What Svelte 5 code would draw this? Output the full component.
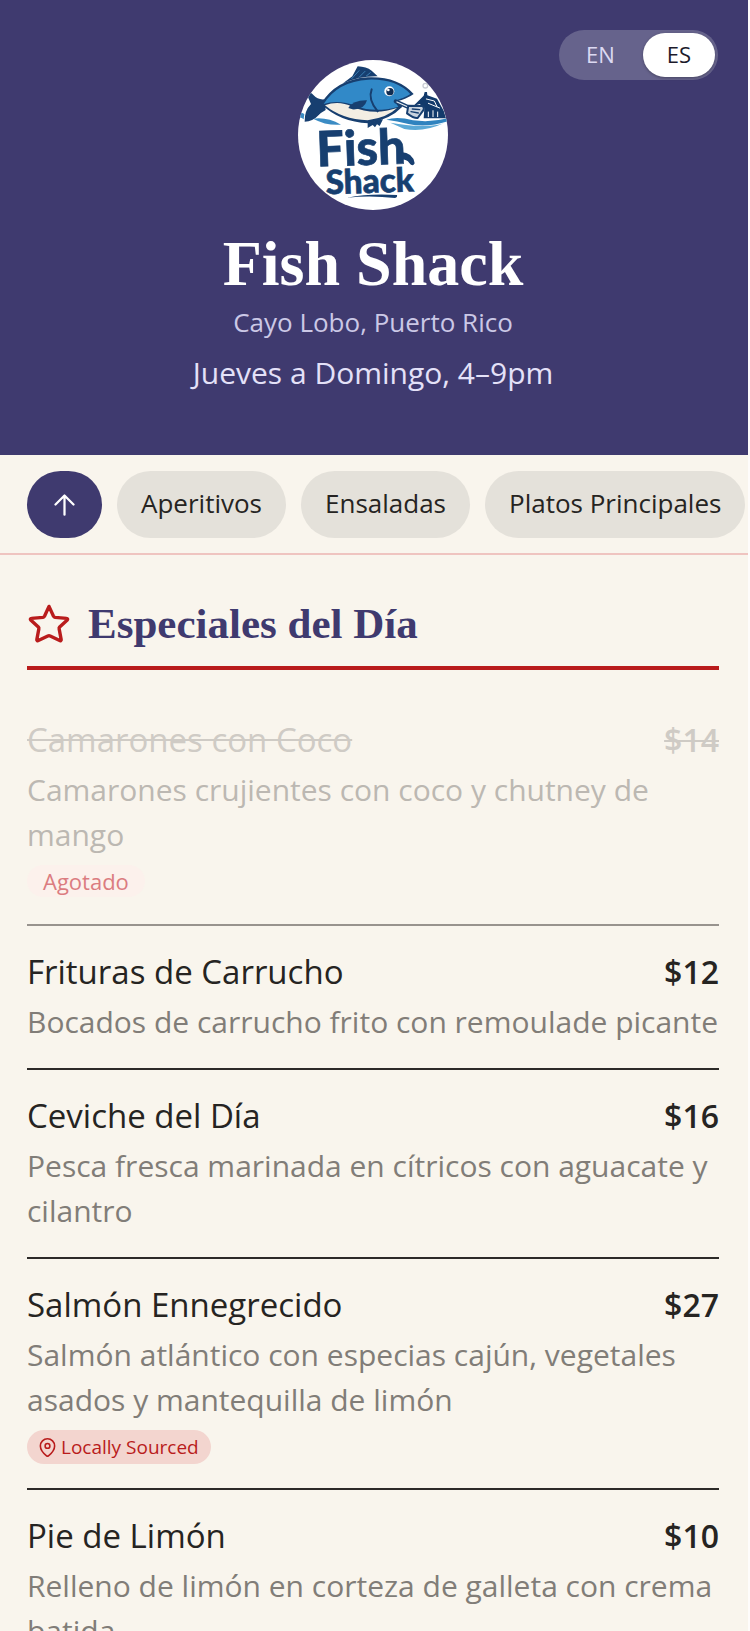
<script>
  let lang = 'es';

  const languages = [
    { id: 'en', label: 'EN' },
    { id: 'es', label: 'ES' }
  ];

  const categories = [
    { id: 'aperitivos', name: 'Aperitivos' },
    { id: 'ensaladas', name: 'Ensaladas' },
    { id: 'platos', name: 'Platos Principales' }
  ];

  const specials = [
    {
      id: 1,
      name: 'Camarones con Coco',
      price: 14,
      description: 'Camarones crujientes con coco y chutney de mango',
      soldOut: true
    },
    { id: 2, name: 'Frituras de Carrucho', price: 12, description: 'Bocados de carrucho frito con remoulade picante' },
    { id: 3, name: 'Ceviche del Día', price: 16, description: 'Pesca fresca marinada en cítricos con aguacate y cilantro' },
    {
      id: 4,
      name: 'Salmón Ennegrecido',
      price: 27,
      description: 'Salmón atlántico con especias cajún, vegetales asados y mantequilla de limón',
      local: true
    },
    { id: 5, name: 'Pie de Limón', price: 10, description: 'Relleno de limón en corteza de galleta con crema batida' }
  ];
</script>

<svelte:head>
  <title>Fish Shack</title>
</svelte:head>

<div class="app" id="top">
  <header>
    <div class="lang-toggle">
      {#each languages as l}
        <button type="button" class:active={lang === l.id} aria-pressed={lang === l.id} on:click={() => (lang = l.id)}>
          {l.label}
        </button>
      {/each}
    </div>

    <svg class="logo" viewBox="53 28 450 450" role="img" aria-label="Fish Shack logo">
      <defs>
        <clipPath id="badge"><circle cx="278" cy="253" r="225" /></clipPath>
      </defs>
      <g clip-path="url(#badge)">
        <rect x="53" y="28" width="450" height="450" fill="#fff" />
        <!-- waves -->
        <path d="M53 188 Q62 184 72 190 L70 206 Q62 198 53 202Z" fill="#3b8cc4" />
        <path d="M98 204 Q140 198 182 222 Q140 226 98 204Z" fill="#3b8cc4" />
        <path d="M318 207 Q350 196 398 209 Q450 216 503 203 L503 212 Q440 232 384 220 Q350 211 318 207Z" fill="#2f83bf" />
        <path d="M330 216 Q380 224 420 226 Q460 228 490 218 Q430 246 372 235Z" fill="#5ba9d6" />
        <!-- shack -->
        <path d="M399 166 L430 135 L433 124 L440 124 L441 134 L470 144 L490 180 L497 203 L430 203 L432 172 L418 160Z" fill="#123a6b" />
        <path d="M438 145 L462 151 L470 168 M444 158 L478 172" fill="none" stroke="#fff" stroke-width="3" />
        <path d="M444 184 V198 M458 180 V198 M472 184 V198" stroke="#fff" stroke-width="3" />
        <circle cx="435" cy="105" r="7" fill="none" stroke="#c9ccd4" stroke-width="4" />
        <!-- fish -->
        <path d="M188 98 Q204 86 216 77 Q226 58 232 47 Q258 48 274 60 L292 77 Q238 76 188 98Z" fill="#173f70" />
        <path d="M214 84 L236 60 M236 80 L254 62 M258 76 L270 66" stroke="#3b7fb5" stroke-width="3" />
        <path d="M132 146 Q112 148 100 134 Q88 120 78 124 Q84 144 92 160 Q72 180 73 213 Q98 212 112 196 Q124 184 136 178Z" fill="#173f70" />
        <path d="M262 216 L308 206 L298 226 L290 221 L284 230 L277 223 L262 232Z" fill="#173f70" />
        <path d="M122 160 Q166 86 262 80 Q352 76 400 130 Q390 138 374 144 Q366 148 350 152 L366 168 Q330 206 264 218 Q178 214 122 160Z" fill="#173f70" />
        <path d="M130 160 Q172 92 264 87 Q346 84 390 130 Q372 142 342 150 L354 168 Q280 188 228 166 Q174 146 130 160Z" fill="#3189c8" />
        <path d="M134 164 Q174 148 216 168 Q280 196 350 172 Q322 200 262 209 Q184 206 134 164Z" fill="#f3eee3" />
        <path d="M204 172 Q218 148 260 149 Q252 178 216 176Z" fill="#173f70" />
        <path d="M274 116 Q262 146 292 182" fill="none" stroke="#173f70" stroke-width="6" />
        <circle cx="327" cy="122" r="15" fill="#fff" />
        <circle cx="329" cy="123" r="11" fill="#102c52" />
        <circle cx="324" cy="118" r="4" fill="#fff" />
        <!-- spatula -->
        <path d="M346 152 L390 172" stroke="#173f70" stroke-width="12" />
        <path d="M350 154 L390 172" stroke="#e8edf2" stroke-width="4" />
        <path d="M384 165 L426 166 Q434 170 428 180 L412 202 Q402 204 380 188Z" fill="#c9d3de" stroke="#173f70" stroke-width="6" />
        <path d="M396 175 L418 177 M392 183 L414 187" stroke="#173f70" stroke-width="4" />
        <!-- lettering -->
        <g class="lettering" transform="rotate(-2 278 350)">
          <text x="110" y="342" font-size="146">Fish</text>
          <text x="134" y="426" font-size="100">Shack</text>
        </g>
        <path d="M362 304 Q398 306 403 338 Q397 350 387 337 Q380 326 362 326Z" fill="#173f70" />
        <path d="M200 441 Q270 427 350 433 Q352 440 344 442 Q270 433 200 441Z" fill="#173f70" />
      </g>
    </svg>

    <h1>Fish Shack</h1>
    <p class="location">Cayo Lobo, Puerto Rico</p>
    <p class="hours">Jueves a Domingo, 4–9pm</p>
  </header>

  <nav>
    <a class="pill pill-top" href="#top" aria-label="Volver arriba">
      <svg viewBox="0 0 24 24" width="27" height="27">
        <path d="M12 21V4M4 12l8-8 8 8" />
      </svg>
    </a>
    {#each categories as category}
      <a class="pill" href="#{category.id}">{category.name}</a>
    {/each}
  </nav>

  <main>
    <h2>
      <svg viewBox="-1 -1 26 26" width="44" height="44" aria-hidden="true">
        <path d="M12 1.600l2.600 5.700c.2.400.5.700 1 .8l6.800.6c.6 0 .8.500.4.900l-4.500 4.200c-.3.300-.4.700-.3 1.100l1.200 6.300c.1.500-.4.900-.9.600l-5.600-2.700a1.600 1.600 0 0 0-1.400 0l-5.600 2.700c-.5.300-1-.1-.9-.6L6 14.900c.1-.4 0-.8-.3-1.100L1.200 9.600c-.4-.4-.2-.9.400-.9l6.800-.6c.5-.1.800-.4 1-.8z" />
      </svg>
      Especiales del Día
    </h2>

    <ul>
      {#each specials as item (item.id)}
        <li class:sold-out={item.soldOut}>
          <div class="item-header">
            <h3>{item.name}</h3>
            <span class="price">${item.price}</span>
          </div>
          <p>{item.description}</p>
          {#if item.soldOut}
            <span class="tag-sold-out">Agotado</span>
          {/if}
          {#if item.local}
            <span class="tag-local">
              <svg viewBox="0 0 24 24" width="19" height="19" aria-hidden="true">
                <path d="M21 10c0 5-5 10.200-7.800 12.500a2 2 0 0 1-2.400 0C8 20.200 3 15 3 10a9 9 0 0 1 18 0z" />
                <circle cx="12" cy="10" r="3" />
              </svg>
              Locally Sourced
            </span>
          {/if}
        </li>
      {/each}
    </ul>
  </main>
</div>

<style>
  :global(body) {
    background: #f9f5ed;
  }

  .app {
    box-sizing: border-box;
    height: 100vh;
    overflow: hidden auto;
    scrollbar-width: none;
    border-right: 2px solid #fefcfb;
    background: #f9f5ed;
    color: #262422;
    font-family: 'Open Sans', sans-serif;
  }

  h1, h2, h3, p, ul {
    margin: 0;
    padding: 0;
    font-weight: 400;
  }

  header {
    position: relative;
    display: flex;
    flex-direction: column;
    align-items: center;
    padding: 60px 30px 60px 28px;
    background: #3f3a6f;
    color: #fff;
    text-align: center;
  }

  .lang-toggle {
    position: absolute;
    top: 30px;
    right: 30px;
    display: flex;
    gap: 4px;
    padding: 3px;
    border-radius: 25px;
    background: #66638c;
  }

  .lang-toggle button {
    height: 44px;
    padding: 0 24px 2px;
    border: 0;
    border-radius: 22px;
    background: none;
    color: #dcd9f2;
    font: 22px 'Open Sans', sans-serif;
    cursor: pointer;
  }

  .lang-toggle button.active {
    background: #fff;
    color: #1c1a2b;
    box-shadow: 0 1px 3px rgba(0, 0, 0, 0.3);
  }

  .logo {
    width: 150px;
    height: 150px;
  }

  .lettering {
    fill: #173f70;
    stroke: #173f70;
    stroke-width: 2;
    font-family: Lato, sans-serif;
    font-weight: 900;
  }

  h1 {
    margin-top: 18px;
    font: 700 64px/72px 'Liberation Serif', serif;
  }

  .location {
    margin-top: 3px;
    color: #cbc8e6;
    font-size: 26px;
    line-height: 39px;
  }

  .hours {
    margin-top: 8px;
    color: #e4e1f8;
    font-size: 30px;
    line-height: 45px;
  }

  nav {
    display: flex;
    gap: 15px;
    padding: 16px 0 15px 27px;
    overflow-x: auto;
    scrollbar-width: none;
    border-bottom: 2px solid #efc4c0;
  }

  .pill {
    flex-shrink: 0;
    padding: 0 24px 3px;
    border-radius: 34px;
    background: #e4e1da;
    color: #262422;
    font-size: 26px;
    font-weight: 500;
    line-height: 64px;
    text-decoration: none;
    white-space: nowrap;
  }

  .pill-top {
    display: flex;
    align-items: center;
    padding: 0 24px;
    background: #3f3a6f;
  }

  svg path,
  svg circle {
    stroke-linecap: round;
    stroke-linejoin: round;
  }

  .pill-top path {
    fill: none;
    stroke: #fff;
    stroke-width: 2;
  }

  main {
    padding: 41px 29px 0 27px;
  }

  h2 {
    display: flex;
    align-items: center;
    gap: 17px;
    padding-bottom: 14px;
    border-bottom: 4px solid #b91c1c;
    color: #3f3a6f;
    font: 700 43px/56px 'Liberation Serif', serif;
  }

  h2 path {
    fill: none;
    stroke: #b91c1c;
    stroke-width: 2;
  }

  ul {
    padding-top: 24px;
    list-style: none;
  }

  li {
    padding: 22px 0 24px;
    border-bottom: 2px solid #2d2a28;
  }

  .item-header {
    display: flex;
    justify-content: space-between;
    margin-bottom: 3px;
    line-height: 48px;
  }

  h3 {
    font-size: 33px;
  }

  .price {
    font-size: 32px;
    font-weight: 600;
  }

  li p {
    color: #817d78;
    font-size: 30px;
    line-height: 45px;
  }

  .sold-out {
    border-color: #98938e;
  }

  .sold-out .item-header {
    color: #cfcbc5;
    text-decoration: line-through;
    text-decoration-thickness: 2px;
  }

  .sold-out p {
    color: #bcb8b2;
  }

  .tag-sold-out {
    display: block;
    width: fit-content;
    margin: 8px 0 3px;
    padding: 0 16px;
    border-radius: 16px;
    background: #fcf1ec;
    color: #db7c80;
    font-size: 22px;
    line-height: 32px;
  }

  .tag-local {
    display: flex;
    align-items: center;
    gap: 4px;
    width: fit-content;
    margin-top: 8px;
    padding: 0 12px 0 11px;
    border-radius: 17px;
    background: #f3d5cf;
    color: #b91c1c;
    font-size: 19px;
    font-weight: 500;
    line-height: 34px;
  }

  .tag-local svg {
    fill: none;
    stroke: #b91c1c;
    stroke-width: 2;
  }
</style>
